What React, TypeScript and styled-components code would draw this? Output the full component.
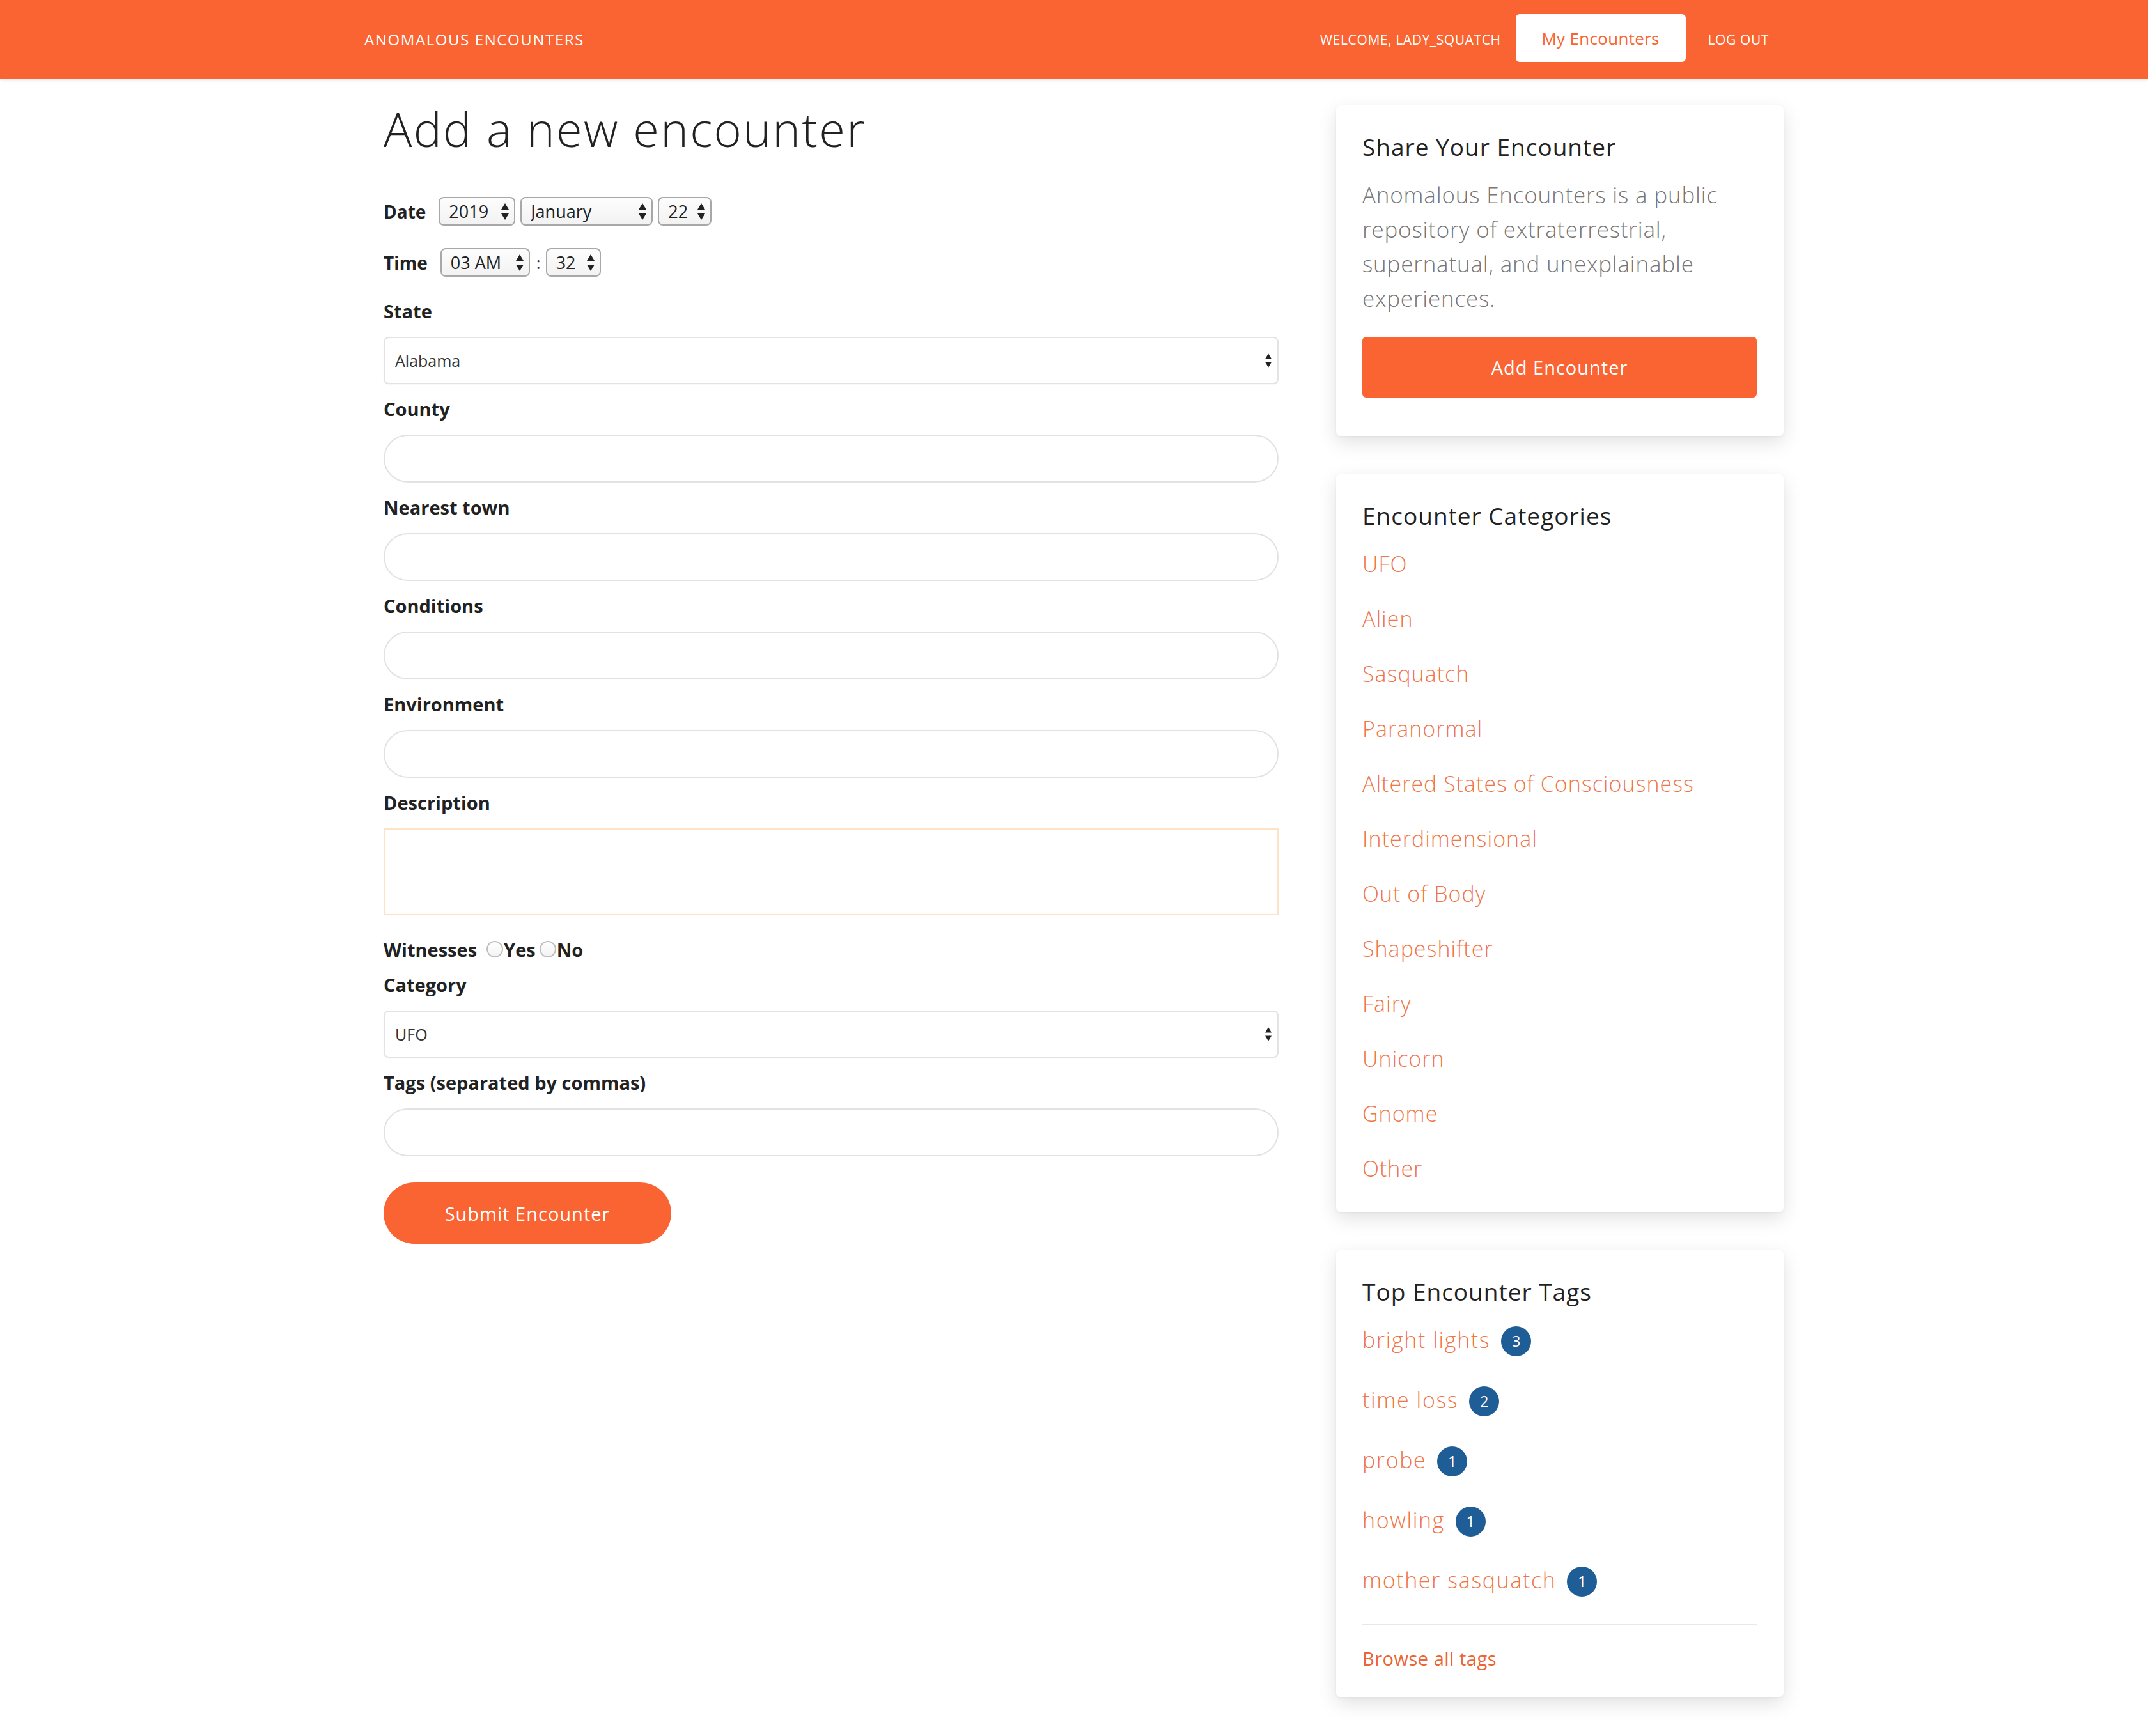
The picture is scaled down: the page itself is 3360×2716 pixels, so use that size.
import React from "react";
import styled, { createGlobalStyle } from "styled-components";

const ORANGE = "#fa6432";
const LINK = "#f0764a";
const FONT = `"Open Sans", "Noto Sans", "Liberation Sans", sans-serif`;

const Global = createGlobalStyle`
  html, body { margin: 0; padding: 0; background: #fff; }
  body { font-family: ${FONT}; color: #222; }
  * { box-sizing: border-box; }
`;

const Nav = styled.header`
  background: ${ORANGE};
  height: 123px;
  box-shadow: 0 3px 6px rgba(0, 0, 0, 0.08);
`;

const NavInner = styled.div`
  width: 2220px;
  margin: 0 auto;
  height: 100%;
  display: flex;
  align-items: center;
  justify-content: space-between;
`;

const Brand = styled.a`
  color: #fff;
  font-size: 24px;
  font-weight: 400;
  letter-spacing: 1.6px;
  text-transform: uppercase;
  text-decoration: none;
`;

const NavRight = styled.nav`
  display: flex;
  align-items: center;
`;

const NavText = styled.span`
  color: #fff;
  font-size: 21px;
  letter-spacing: 0.6px;
  font-weight: 400;
  text-transform: uppercase;
`;

const NavButton = styled.a`
  display: flex;
  align-items: center;
  justify-content: center;
  width: 266px;
  height: 75px;
  margin: -4px 35px 0 23px;
  background: #fff;
  color: ${ORANGE};
  border-radius: 6px;
  font-size: 26px;
  letter-spacing: 0.3px;
  text-decoration: none;
`;

const NavLink = styled.a`
  color: #fff;
  font-size: 21px;
  letter-spacing: 0.6px;
  text-transform: uppercase;
  text-decoration: none;
  margin-right: 23px;
`;

const Page = styled.main`
  width: 2220px;
  margin: 0 auto;
  display: grid;
  grid-template-columns: 1460px 700px;
  column-gap: 60px;
  align-items: start;
  padding-bottom: 60px;
`;

const FormCol = styled.section`
  padding: 0 30px;
`;

const Title = styled.h1`
  margin: 36px 0 0;
  font-size: 74px;
  letter-spacing: 2.3px;
  line-height: 86px;
  font-weight: 300;
  color: #222;
`;

const InlineRow = styled.div<{ $top: number }>`
  display: flex;
  align-items: center;
  height: 45px;
  margin-top: ${(p) => p.$top}px;
`;

const InlineLabel = styled.label`
  font-size: 28px;
  font-weight: 700;
  color: #222;
  margin-right: 20px;
`;

const SelectWrap = styled.div<{ $w: number }>`
  position: relative;
  width: ${(p) => p.$w}px;
  height: 45px;
  margin-right: 8px;
`;

const SmallSelect = styled.select`
  appearance: none;
  -webkit-appearance: none;
  width: 100%;
  height: 100%;
  border: 2px solid #a8a8a8;
  border-radius: 8px;
  background: linear-gradient(#fdfdfd, #f2f2f2);
  font-family: ${FONT};
  font-size: 27px;
  color: #222;
  padding: 0 0 0 14px;
`;

const ArrowBox = styled.span<{ $right: number }>`
  position: absolute;
  right: ${(p) => p.$right}px;
  top: 50%;
  transform: translateY(-50%);
  display: flex;
  pointer-events: none;
`;

const Colon = styled.span`
  font-size: 26px;
  color: #333;
  margin: 0 8px 0 2px;
`;

const Group = styled.div<{ $mb?: number }>`
  display: flex;
  flex-direction: column;
  margin-bottom: ${(p) => p.$mb ?? 19}px;
`;

const FirstGroupSpacer = styled.div`
  height: 34px;
`;

const Label = styled.label`
  font-size: 29px;
  line-height: 40px;
  font-weight: 700;
  color: #222;
  margin-bottom: 20px;
`;

const BigSelectWrap = styled.div`
  position: relative;
  height: 74px;
`;

const BigSelect = styled.select`
  appearance: none;
  -webkit-appearance: none;
  width: 100%;
  height: 100%;
  border: 2px solid #e3e3e3;
  border-radius: 8px;
  background: #fff;
  font-family: ${FONT};
  font-size: 25px;
  color: #333;
  padding: 0 0 0 16px;
  box-shadow: 0 1px 2px rgba(0, 0, 0, 0.04);
`;

const TextInput = styled.input`
  width: 100%;
  height: 75px;
  border: 2px solid #e2e2e2;
  border-radius: 38px;
  background: #fff;
  font-family: ${FONT};
  font-size: 26px;
  padding: 0 30px;
  outline: none;
`;

const TextArea = styled.textarea`
  width: 100%;
  height: 136px;
  border: 2px solid #fde2c6;
  border-radius: 0;
  background: #fff;
  font-family: ${FONT};
  font-size: 26px;
  padding: 12px 16px;
  resize: none;
  outline: none;
`;

const RadioRow = styled.div`
  display: flex;
  align-items: center;
  height: 40px;
  margin-bottom: 16px;
`;

const RadioLabel = styled.label`
  font-size: 29px;
  font-weight: 700;
  color: #222;
  display: flex;
  align-items: center;
`;

const RadioTitle = styled(RadioLabel)`
  margin-right: 15px;
`;

const Radio = styled.input`
  appearance: none;
  -webkit-appearance: none;
  width: 26px;
  height: 26px;
  margin: 0 1px 0 0;
  border: 2px solid #bdbdbd;
  border-radius: 50%;
  background: linear-gradient(#ffffff, #f3f3f3);
`;

const RadioOption = styled(RadioLabel)`
  margin-right: 6px;
`;

const SubmitButton = styled.button`
  margin-top: 41px;
  width: 450px;
  height: 96px;
  border: none;
  border-radius: 48px;
  background: ${ORANGE};
  color: #fff;
  font-family: ${FONT};
  font-size: 29px;
  letter-spacing: 1px;
  font-weight: 400;
`;

const Sidebar = styled.aside`
  display: flex;
  flex-direction: column;
  gap: 60px;
  padding-top: 42px;
`;

const Card = styled.div`
  background: #fff;
  border-radius: 6px;
  box-shadow: 0 10px 30px rgba(0, 0, 0, 0.12), 0 1px 4px rgba(0, 0, 0, 0.05);
  padding: 41px 42px 40px 41px;
`;

const CardTitle = styled.h3`
  margin: 0;
  font-size: 37px;
  letter-spacing: 1px;
  line-height: 48px;
  font-weight: 400;
  color: #222;
`;

const CardText = styled.p`
  margin: 24px 0 33px;
  font-size: 35px;
  letter-spacing: 0.8px;
  line-height: 54px;
  font-weight: 300;
  color: #777;
`;

const CardButton = styled.a`
  display: flex;
  align-items: center;
  justify-content: center;
  height: 95px;
  margin-bottom: 20px;
  background: ${ORANGE};
  color: #fff;
  border-radius: 6px;
  font-size: 29px;
  letter-spacing: 1px;
  text-decoration: none;
`;

const LinkList = styled.ul<{ $gap: number }>`
  list-style: none;
  margin: 27px 0 4px;
  padding: 0;
  display: flex;
  flex-direction: column;
  gap: ${(p) => p.$gap}px;
`;

const CategoryLink = styled.a`
  display: block;
  font-size: 34px;
  letter-spacing: 1px;
  line-height: 48px;
  font-weight: 300;
  color: ${LINK};
  text-decoration: none;
`;

const TagItem = styled.li`
  display: flex;
  align-items: center;
  height: 48px;
`;

const TagLink = styled.a`
  font-size: 34px;
  letter-spacing: 1.6px;
  line-height: 48px;
  font-weight: 300;
  color: ${LINK};
  text-decoration: none;
  margin-right: 17px;
`;

const Badge = styled.span`
  display: inline-flex;
  align-items: center;
  justify-content: center;
  width: 47px;
  height: 47px;
  border-radius: 50%;
  background: #1f5d97;
  color: #fff;
  font-size: 23px;
  margin-top: 4px;
`;

const Divider = styled.hr`
  border: none;
  border-top: 2px solid #e8e8e8;
  margin: 45px 0 32px;
`;

const BrowseLink = styled.a`
  display: block;
  font-size: 29px;
  letter-spacing: 0.5px;
  line-height: 40px;
  font-weight: 400;
  color: #ec6535;
  text-decoration: none;
`;

const Arrows: React.FC<{ w: number; h: number }> = ({ w, h }) => (
  <svg width={w} height={h} viewBox="0 0 12 26" fill="#222">
    <path d="M6 0 L12 10 H0 Z" />
    <path d="M0 16 H12 L6 26 Z" />
  </svg>
);

const Small: React.FC<{ w: number; value: string }> = ({ w, value }) => (
  <SelectWrap $w={w}>
    <SmallSelect defaultValue={value}>
      <option>{value}</option>
    </SmallSelect>
    <ArrowBox $right={10}>
      <Arrows w={12} h={26} />
    </ArrowBox>
  </SelectWrap>
);

const Big: React.FC<{ value: string }> = ({ value }) => (
  <BigSelectWrap>
    <BigSelect defaultValue={value}>
      <option>{value}</option>
    </BigSelect>
    <ArrowBox $right={11}>
      <Arrows w={10} h={22} />
    </ArrowBox>
  </BigSelectWrap>
);

const categories = [
  "UFO",
  "Alien",
  "Sasquatch",
  "Paranormal",
  "Altered States of Consciousness",
  "Interdimensional",
  "Out of Body",
  "Shapeshifter",
  "Fairy",
  "Unicorn",
  "Gnome",
  "Other",
];

const tags: [string, number][] = [
  ["bright lights", 3],
  ["time loss", 2],
  ["probe", 1],
  ["howling", 1],
  ["mother sasquatch", 1],
];

const textFields = ["County", "Nearest town", "Conditions", "Environment"];

export default function App() {
  return (
    <>
      <Global />
      <Nav>
        <NavInner>
          <Brand href="#">Anomalous Encounters</Brand>
          <NavRight>
            <NavText>Welcome, lady_squatch</NavText>
            <NavButton href="#">My Encounters</NavButton>
            <NavLink href="#">Log out</NavLink>
          </NavRight>
        </NavInner>
      </Nav>
      <Page>
        <FormCol>
          <Title>Add a new encounter</Title>
          <InlineRow $top={63}>
            <InlineLabel>Date</InlineLabel>
            <Small w={120} value="2019" />
            <Small w={207} value="January" />
            <Small w={84} value="22" />
          </InlineRow>
          <InlineRow $top={35}>
            <InlineLabel>Time</InlineLabel>
            <Small w={140} value="03 AM" />
            <Colon>:</Colon>
            <Small w={86} value="32" />
          </InlineRow>
          <FirstGroupSpacer />
          <Group>
            <Label>State</Label>
            <Big value="Alabama" />
          </Group>
          {textFields.map((f) => (
            <Group key={f}>
              <Label>{f}</Label>
              <TextInput type="text" />
            </Group>
          ))}
          <Group $mb={33}>
            <Label>Description</Label>
            <TextArea />
          </Group>
          <RadioRow>
            <RadioTitle>Witnesses</RadioTitle>
            <RadioOption>
              <Radio type="radio" name="witnesses" />
              Yes
            </RadioOption>
            <RadioOption>
              <Radio type="radio" name="witnesses" />
              No
            </RadioOption>
          </RadioRow>
          <Group>
            <Label>Category</Label>
            <Big value="UFO" />
          </Group>
          <Group $mb={0}>
            <Label>Tags (separated by commas)</Label>
            <TextInput type="text" />
          </Group>
          <SubmitButton type="button">Submit Encounter</SubmitButton>
        </FormCol>
        <Sidebar>
          <Card>
            <CardTitle>Share Your Encounter</CardTitle>
            <CardText>
              Anomalous Encounters is a public repository of extraterrestrial,
              supernatual, and unexplainable experiences.
            </CardText>
            <CardButton href="#">Add Encounter</CardButton>
          </Card>
          <Card>
            <CardTitle>Encounter Categories</CardTitle>
            <LinkList $gap={38}>
              {categories.map((c) => (
                <li key={c}>
                  <CategoryLink href="#">{c}</CategoryLink>
                </li>
              ))}
            </LinkList>
          </Card>
          <Card>
            <CardTitle>Top Encounter Tags</CardTitle>
            <LinkList $gap={46}>
              {tags.map(([t, n]) => (
                <TagItem key={t}>
                  <TagLink href="#">{t}</TagLink>
                  <Badge>{n}</Badge>
                </TagItem>
              ))}
            </LinkList>
            <Divider />
            <BrowseLink href="#">Browse all tags</BrowseLink>
          </Card>
        </Sidebar>
      </Page>
    </>
  );
}
